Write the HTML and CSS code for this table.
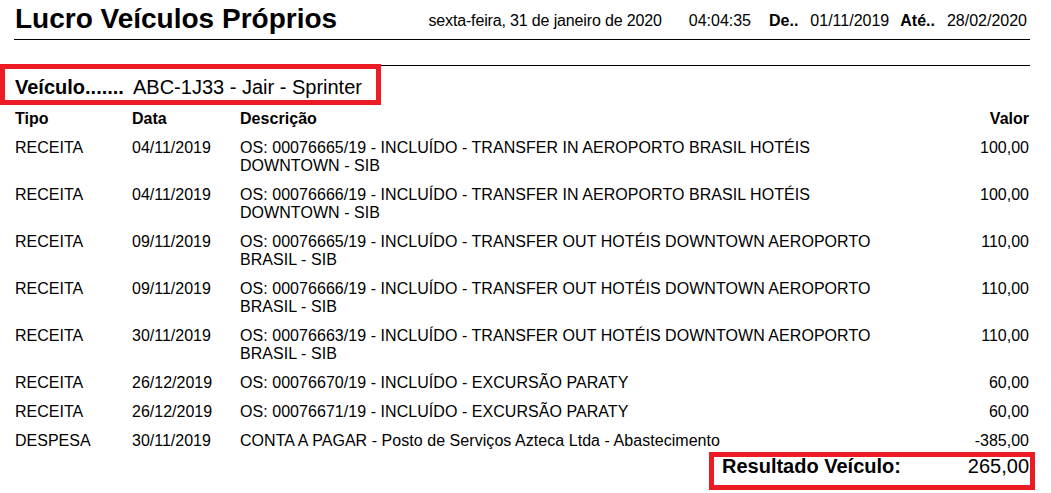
FILE: index.html
```html
<!DOCTYPE html>
<html lang="pt-BR">
<head>
<meta charset="utf-8">
<title>Lucro Veículos Próprios</title>
<link rel="stylesheet" href="styles.css">
</head>
<body>
<div class="report">
  <header class="report-head">
    <h1 class="report-title">Lucro Veículos Próprios</h1>
    <div class="report-meta">
      <span class="meta-date">sexta-feira, 31 de janeiro de 2020</span>
      <span class="meta-time">04:04:35</span>
      <span class="meta-label meta-de">De..</span>
      <span class="meta-value">01/11/2019</span>
      <span class="meta-label meta-ate">Até..</span>
      <span class="meta-value">28/02/2020</span>
    </div>
  </header>

  <section class="group">
    <div class="group-title">
      <div class="mark mark-vehicle"><span class="vehicle-label">Veículo.......</span><span class="vehicle-name">ABC-1J33 - Jair - Sprinter</span></div>
    </div>

    <div class="grid">
      <div class="row row-head">
        <div class="c-tipo">Tipo</div>
        <div class="c-data">Data</div>
        <div class="c-desc">Descrição</div>
        <div class="c-valor">Valor</div>
      </div>
      <div class="row">
        <div class="c-tipo">RECEITA</div>
        <div class="c-data">04/11/2019</div>
        <div class="c-desc">OS: 00076665/19 - INCLUÍDO - TRANSFER IN AEROPORTO BRASIL HOTÉIS DOWNTOWN - SIB</div>
        <div class="c-valor">100,00</div>
      </div>
      <div class="row">
        <div class="c-tipo">RECEITA</div>
        <div class="c-data">04/11/2019</div>
        <div class="c-desc">OS: 00076666/19 - INCLUÍDO - TRANSFER IN AEROPORTO BRASIL HOTÉIS DOWNTOWN - SIB</div>
        <div class="c-valor">100,00</div>
      </div>
      <div class="row">
        <div class="c-tipo">RECEITA</div>
        <div class="c-data">09/11/2019</div>
        <div class="c-desc">OS: 00076665/19 - INCLUÍDO - TRANSFER OUT HOTÉIS DOWNTOWN AEROPORTO BRASIL - SIB</div>
        <div class="c-valor">110,00</div>
      </div>
      <div class="row">
        <div class="c-tipo">RECEITA</div>
        <div class="c-data">09/11/2019</div>
        <div class="c-desc">OS: 00076666/19 - INCLUÍDO - TRANSFER OUT HOTÉIS DOWNTOWN AEROPORTO BRASIL - SIB</div>
        <div class="c-valor">110,00</div>
      </div>
      <div class="row">
        <div class="c-tipo">RECEITA</div>
        <div class="c-data">30/11/2019</div>
        <div class="c-desc">OS: 00076663/19 - INCLUÍDO - TRANSFER OUT HOTÉIS DOWNTOWN AEROPORTO BRASIL - SIB</div>
        <div class="c-valor">110,00</div>
      </div>
      <div class="row">
        <div class="c-tipo">RECEITA</div>
        <div class="c-data">26/12/2019</div>
        <div class="c-desc">OS: 00076670/19 - INCLUÍDO - EXCURSÃO PARATY</div>
        <div class="c-valor">60,00</div>
      </div>
      <div class="row">
        <div class="c-tipo">RECEITA</div>
        <div class="c-data">26/12/2019</div>
        <div class="c-desc">OS: 00076671/19 - INCLUÍDO - EXCURSÃO PARATY</div>
        <div class="c-valor">60,00</div>
      </div>
      <div class="row">
        <div class="c-tipo">DESPESA</div>
        <div class="c-data">30/11/2019</div>
        <div class="c-desc">CONTA A PAGAR - Posto de Serviços Azteca Ltda - Abastecimento</div>
        <div class="c-valor">-385,00</div>
      </div>
    </div>

    <div class="group-total">
      <div class="mark mark-total"><span class="total-label">Resultado Veículo:</span><span class="total-value">265,00</span></div>
    </div>
  </section>
</div>
</body>
</html>
```

FILE: styles.css
```css
* {
  box-sizing: border-box;
}

html, body {
  margin: 0;
  padding: 0;
  background: #ffffff;
}

body {
  font-family: "Liberation Sans", Arial, sans-serif;
  color: #000000;
  font-size: 16px;
  line-height: 18px;
}

.report {
  padding: 0 21px 0 14px;
}

/* header */
.report-head {
  display: flex;
  align-items: flex-start;
  padding-top: 3px;
  padding-bottom: 4px;
  border-bottom: 1px solid #000;
}

.report-title {
  margin: 0;
  font-size: 28px;
  line-height: 32px;
  font-weight: bold;
  padding-left: 1px;
}

.report-meta {
  margin-left: auto;
  margin-right: 3px;
  margin-top: 9px;
  display: flex;
  white-space: nowrap;
}

.meta-date {
  letter-spacing: -0.15px;
}

.meta-time {
  margin-left: 27px;
}

.meta-label {
  font-weight: bold;
}

.meta-de {
  margin-left: 18px;
}

.meta-ate {
  margin-left: 11px;
}

.meta-value {
  margin-left: 12px;
}

/* group */
.group {
  margin-top: 25px;
  border-top: 1px solid #000;
}

.mark {
  border: 5px solid #ed1c24;
  font-size: 20px;
}

.group-title {
  display: flex;
}

.mark-vehicle {
  margin-top: -2px;
  margin-left: -14px;
  padding: 7px 14px 1px 10px;
  line-height: 23px;
  display: flex;
}

.vehicle-label {
  font-weight: bold;
  width: 118px;
}

/* grid */
.grid {
  margin-top: 5px;
}

.row {
  display: grid;
  grid-template-columns: 118px 108px 650px 1fr;
  padding: 5px 0 6px;
}

.row-head {
  font-weight: bold;
  padding: 0 0 6px;
}

.c-tipo {
  padding-left: 1px;
}

.c-desc {
  letter-spacing: 0.05px;
}

.c-valor {
  text-align: right;
  padding-right: 1px;
}

/* total */
.group-total {
  display: flex;
  justify-content: flex-end;
  margin-top: -4px;
}

.mark-total {
  width: 326px;
  margin-right: -5px;
  display: flex;
  justify-content: space-between;
  padding: 0 1px 10px 8px;
  line-height: 18px;
}

.total-label {
  font-weight: bold;
}
```
